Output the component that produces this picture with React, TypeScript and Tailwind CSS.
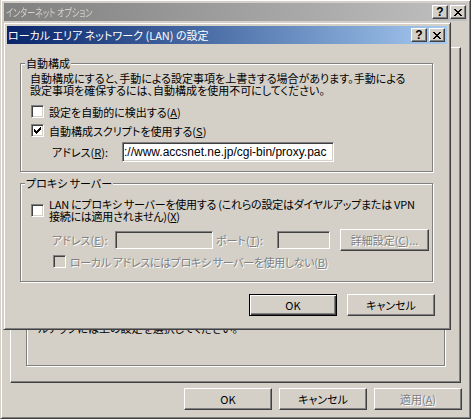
const raised =
  "border border-t-white border-l-white border-r-[#404040] border-b-[#404040] shadow-[inset_-1px_-1px_0_#808080]";
const sunken =
  "border border-t-[#808080] border-l-[#808080] border-r-white border-b-white shadow-[inset_1px_1px_0_#404040,inset_-1px_-1px_0_#d4d0c8]";
const etched = "border border-[#808080] shadow-[inset_1px_1px_0_#fff,1px_1px_0_#fff]";
const frame =
  "border border-t-[#d4d0c8] border-l-[#d4d0c8] border-r-[#404040] border-b-[#404040] shadow-[inset_1px_1px_0_#fff,inset_-1px_-1px_0_#808080] p-[3px] bg-[#d4d0c8]";
const dim = "text-[#808080] [text-shadow:1px_1px_0_#fff]";

const CloseGlyph = () => (
  <svg width="8" height="7" viewBox="0 0 8 7" shapeRendering="crispEdges">
    <path
      fill="#000"
      d="M0 0h2v1H0zM6 0h2v1H6zM1 1h2v1H1zM5 1h2v1H5zM2 2h4v1H2zM3 3h2v1H3zM2 4h4v1H2zM1 5h2v1H1zM5 5h2v1H5zM0 6h2v1H0zM6 6h2v1H6z"
    />
  </svg>
);

const CaptionButtons = () => (
  <div className="ml-auto flex gap-[2px]">
    <div className={`w-[16px] h-[14px] flex items-center justify-center bg-[#d4d0c8] ${raised}`}>
      <span className="font-['Liberation_Sans',sans-serif] font-bold text-[12px] leading-[12px] text-black">?</span>
    </div>
    <div className={`w-[16px] h-[14px] flex items-center justify-center bg-[#d4d0c8] ${raised}`}>
      <CloseGlyph />
    </div>
  </div>
);

const Check = ({ checked = false, disabled = false }: { checked?: boolean; disabled?: boolean }) => (
  <span
    className={`w-[13px] h-[13px] shrink-0 flex items-center justify-center ${sunken} ${
      disabled ? "bg-[#d4d0c8]" : "bg-white"
    }`}
  >
    {checked && (
      <svg width="7" height="7" viewBox="0 0 7 7" shapeRendering="crispEdges">
        <path
          fill="#000"
          d="M6 0h1v1H6zM5 1h2v1H5zM0 2h1v1H0zM4 2h3v1H4zM0 3h2v1H0zM3 3h3v1H3zM0 4h5v1H0zM1 5h3v1H1zM2 6h1v1H2z"
        />
      </svg>
    )}
  </span>
);

const Button = ({ label, wide = 88, dflt = false, disabled = false }: { label: React.ReactNode; wide?: number; dflt?: boolean; disabled?: boolean }) => (
  <div
    style={{ width: wide }}
    className={`h-[22px] flex items-center justify-center bg-[#d4d0c8] ${
      dflt
        ? "border border-black shadow-[inset_1px_1px_0_#fff,inset_-1px_-1px_0_#404040,inset_-2px_-2px_0_#808080]"
        : raised
    } ${disabled ? dim : ""}`}
  >
    {label}
  </div>
);

export default function App() {
  return (
    <div
      className={
        'relative w-[471px] h-[419px] overflow-hidden bg-[#d4d0c8] text-black text-[11px] leading-[12px] font-["Noto_Sans_CJK_JP",sans-serif] [font-feature-settings:"palt"]'
      }
    >
      {/* background window */}
      <div className={`-mt-px h-[420px] flex flex-col ${frame}`}>
        <div className="h-[18px] shrink-0 flex items-center pl-[2px] pr-[1px] bg-linear-to-r from-[#808080] to-[#c0c0c0] text-[#d4d0c8]">
          <span className="inline-block w-[100px] whitespace-nowrap origin-left scale-x-[0.73]">インターネット オプション</span>
          <CaptionButtons />
        </div>
        <div className="mt-[26px] mx-[6px] h-[336px] flex flex-col justify-end px-[15px] pb-[16px] border border-t-white border-l-white border-r-[#404040] border-b-[#404040] shadow-[inset_-1px_-1px_0_#808080]">
          <div className={`${etched} pl-[11px] pt-[10px] pb-[31px] whitespace-nowrap`}>
            <div>LAN の設定はダイヤルアップ接続には適用されません。ダイヤ</div>
            <div>ルアップには上の設定を選択してください。</div>
          </div>
        </div>
        <div className="mt-[5px] flex justify-end gap-[7px] pr-[5px]">
          <Button label="OK" />
          <Button label="キャンセル" />
          <Button
            disabled
            label={
              <span>
                適用(<u>A</u>)
              </span>
            }
          />
        </div>
      </div>

      {/* LAN settings dialog */}
      <div className={`absolute left-[3px] top-[22px] w-[448px] h-[308px] flex flex-col ${frame}`}>
        <div className="h-[18px] shrink-0 flex items-center pl-[1px] pr-[2px] bg-linear-to-r from-[#0a246a] to-[#a6caf0] text-white">
          <span>ローカル エリア ネットワーク (LAN) の設定</span>
          <CaptionButtons />
        </div>

        <div className={`mt-[19px] ml-[13px] mr-[14px] ${etched} pb-[9px]`}>
          <div className="-mt-[7px] ml-[4px] px-[1px] w-fit bg-[#d4d0c8]">自動構成</div>
          <div className="mt-[3px] pl-[9px] whitespace-nowrap">
            <div>自動構成にすると、手動による設定事項を上書きする場合があります。手動による</div>
            <div>設定事項を確保するには、自動構成を使用不可にしてください。</div>
          </div>
          <div className="mt-[9px] h-[13px] pl-[10px] flex items-center gap-[5px]">
            <Check />
            <span>
              設定を自動的に検出する(<u>A</u>)
            </span>
          </div>
          <div className="mt-[6px] h-[13px] pl-[10px] flex items-center gap-[5px]">
            <Check checked />
            <span>
              自動構成スクリプトを使用する(<u>S</u>)
            </span>
          </div>
          <div className="mt-[5px] pl-[31px] flex items-center">
            <span className="w-[70px]">
              アドレス(<u>R</u>):
            </span>
            <div className={`w-[212px] h-[20px] bg-white flex items-center overflow-hidden ${sunken}`}>
              <span className="pl-[1px] whitespace-nowrap font-['Liberation_Sans',sans-serif] text-[12px]">
                ://www.accsnet.ne.jp/cgi-bin/proxy.pac
              </span>
            </div>
          </div>
        </div>

        <div className={`mt-[11px] ml-[13px] mr-[14px] ${etched} pb-[13px]`}>
          <div className="-mt-[7px] ml-[4px] px-[1px] w-fit bg-[#d4d0c8]">プロキシ サーバー</div>
          <div className="mt-[9px] pl-[10px] flex items-center gap-[5px]">
            <Check />
            <div className="whitespace-nowrap tracking-[-0.25px]">
              <div>LAN にプロキシ サーバーを使用する (これらの設定はダイヤルアップまたは VPN</div>
              <div>
                接続には適用されません)(<u>X</u>)
              </div>
            </div>
          </div>
          <div className={`mt-[7px] h-[22px] pl-[31px] flex items-center ${dim}`}>
            <span className="w-[63px]">
              アドレス(<u>E</u>):
            </span>
            <div className={`w-[98px] h-[18px] bg-[#d4d0c8] ${sunken}`} />
            <span className="ml-[3px] w-[61px]">
              ポート(<u>T</u>):
            </span>
            <div className={`w-[53px] h-[18px] bg-[#d4d0c8] ${sunken}`} />
            <div className={`ml-[10px] w-[89px] h-[22px] flex items-center justify-center bg-[#d4d0c8] ${raised}`}>
              詳細設定(<u>C</u>)...
            </div>
          </div>
          <div className={`mt-[4px] h-[13px] pl-[32px] flex items-center gap-[4px] ${dim}`}>
            <Check disabled />
            <span className="tracking-[-0.35px]">
              ローカル アドレスにはプロキシ サーバーを使用しない(<u>B</u>)
            </span>
          </div>
        </div>

        <div className="mt-[12px] flex justify-end gap-[10px] pr-[12px]">
          <Button label="OK" dflt />
          <Button label="キャンセル" />
        </div>
      </div>
    </div>
  );
}
